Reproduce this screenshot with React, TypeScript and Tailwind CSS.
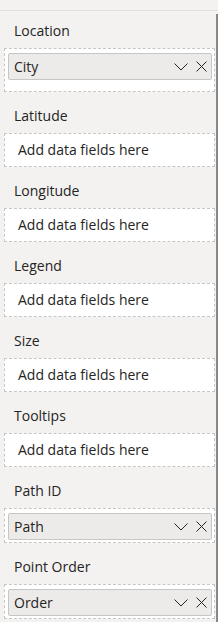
type Field = { label: string; value?: string; extra?: boolean };

const fields: Field[] = [
  { label: "Location", value: "City", extra: true },
  { label: "Latitude" },
  { label: "Longitude" },
  { label: "Legend" },
  { label: "Size" },
  { label: "Tooltips" },
  { label: "Path ID", value: "Path" },
  { label: "Point Order", value: "Order" },
];

function Chevron() {
  return (
    <svg width="14" height="8" viewBox="0 0 14 8" fill="none">
      <path d="M0.5 0.5 L7 7 L13.5 0.5" stroke="#252423" strokeWidth="1" />
    </svg>
  );
}

function Close() {
  return (
    <svg width="11" height="11" viewBox="0 0 11 11" fill="none">
      <path d="M0.5 0.5 L10.5 10.5 M10.5 0.5 L0.5 10.5" stroke="#252423" strokeWidth="1" />
    </svg>
  );
}

function Well({ field, first }: { field: Field; first: boolean }) {
  return (
    <div className={first ? "pt-[10px]" : "pt-[14px]"}>
      <div className="h-[20px] leading-[20px] pl-[14px] mb-[7px] text-[14px] text-[#252423]">
        {field.label}
      </div>
      {field.value ? (
        <div
          className={`ml-[4px] w-[211px] border border-dashed border-[#c8c6c4] bg-white pl-[3px] pr-[2px] pt-[4px] ${
            field.extra ? "pb-[11px]" : "pb-[2px]"
          }`}
        >
          <div className="h-[27px] flex items-center bg-[#edebe9] border border-[#c8c6c4] rounded-[2px] pl-[5px] pr-[4px]">
            <span className="text-[14px] text-[#252423] leading-[20px]">{field.value}</span>
            <div className="ml-auto flex items-center gap-[8px]">
              <Chevron />
              <Close />
            </div>
          </div>
        </div>
      ) : (
        <div className="ml-[4px] w-[211px] h-[34px] border border-dashed border-[#c8c6c4] bg-white pl-[13px] flex items-center">
          <span className="text-[14px] text-[#252423] leading-[20px]">Add data fields here</span>
        </div>
      )}
    </div>
  );
}

export default function App() {
  return (
    <div
      className="w-[218px] h-[622px] bg-[#f3f2f1] overflow-hidden flex flex-col"
      style={{ fontFamily: '"Open Sans", "Noto Sans", sans-serif' }}
    >
      <div className="h-[10px] shrink-0" />
      <div className="h-px shrink-0 bg-[#e1dfdd]" />
      <div className="flex flex-1 min-h-0">
        <div className="w-[216px]">
          {fields.map((f, i) => (
            <Well key={f.label} field={f} first={i === 0} />
          ))}
        </div>
        <div className="w-[2px] pt-[3px] flex flex-col">
          <div className="flex-1 bg-[#8a8886]" />
        </div>
      </div>
    </div>
  );
}
